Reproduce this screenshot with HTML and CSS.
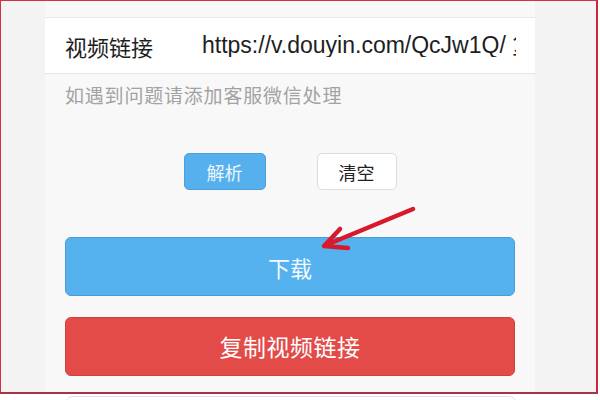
FILE: index.html
```html
<!DOCTYPE html>
<html lang="zh-CN">
<head>
<meta charset="utf-8">
<title>视频下载</title>
<link rel="stylesheet" href="styles.css">
</head>
<body>
<div class="frame">
  <div class="column">
    <div class="field">
      <span class="field-label">视频链接</span>
      <span class="field-value">https://v.douyin.com/QcJw1Q/ 复</span>
    </div>
    <p class="hint">如遇到问题请添加客服微信处理</p>
    <div class="actions">
      <button class="btn btn-primary-sm">解析</button>
      <button class="btn btn-plain">清空</button>
    </div>
    <button class="btn-block btn-blue">下载</button>
    <button class="btn-block btn-red">复制视频链接</button>
  </div>
  <svg class="arrow" width="600" height="400" viewBox="0 0 600 400">
    <path d="M413 209 L326 245" stroke="#d8192c" stroke-width="4.5" stroke-linecap="round" fill="none"/>
    <path d="M340 229 L324 246 L348 248" stroke="#d8192c" stroke-width="4.5" stroke-linecap="round" stroke-linejoin="round" fill="none"/>
  </svg>
</div>
<div class="next-card"></div>
</body>
</html>
```
FILE: styles.css
```css
html, body {
  margin: 0;
  padding: 0;
  background: #ffffff;
  overflow: hidden;
}
body {
  width: 600px;
  height: 400px;
  font-family: "Noto Sans CJK SC", "Liberation Sans", sans-serif;
}
.frame {
  position: relative;
  width: 595px;
  height: 391px;
  border-top: 1px solid #cf3343;
  border-left: 1px solid #cf3343;
  border-right: 2px solid #c8283c;
  border-bottom: 2px solid #a83442;
  background: #f3f3f4;
}
.column {
  margin-left: 44px;
  width: 490px;
  height: 100%;
  background: #f8f8f9;
  padding-top: 16px;
  box-sizing: border-box;
  display: flex;
  flex-direction: column;
}
.field {
  height: 55px;
  background: #ffffff;
  border-top: 1px solid #e8e8e8;
  border-bottom: 1px solid #e4e4e4;
  display: flex;
  align-items: center;
  padding: 0 19px 0 20px;
}
.field-label {
  flex: 0 0 137px;
  font-size: 22px;
  color: #1e1e1e;
  line-height: 1;
}
.field-value {
  flex: 1;
  overflow: hidden;
  white-space: nowrap;
  font-family: "Liberation Sans", "Noto Sans CJK SC", sans-serif;
  font-size: 23px;
  color: #1e1e1e;
  line-height: 1;
}
.hint {
  margin: 9px 0 0 20px;
  font-size: 19px;
  letter-spacing: 0.8px;
  line-height: 24px;
  color: #a2a2a2;
}
.actions {
  margin-top: 46px;
  display: flex;
  justify-content: center;
  gap: 51px;
}
.btn {
  height: 37px;
  border-radius: 5px;
  font-family: "Noto Sans CJK SC", sans-serif;
  font-size: 18px;
  padding: 0;
  line-height: 1;
  box-sizing: border-box;
}
.btn-primary-sm {
  width: 82px;
  background: #56b0ee;
  border: 1px solid #4f9fd9;
  color: #eef7ff;
}
.btn-plain {
  width: 80px;
  background: #ffffff;
  border: 1px solid #dcdcdc;
  color: #222222;
}
.btn-block {
  margin: 0 20px;
  height: 59px;
  border-radius: 6px;
  font-family: "Noto Sans CJK SC", sans-serif;
  font-size: 22px;
  line-height: 1;
  color: #ffffff;
  padding: 0;
  box-sizing: border-box;
}
.btn-blue {
  margin-top: 47px;
  background: #56b1ef;
  border: 1px solid #4a9bd4;
  color: #f2f9ff;
}
.btn-red {
  margin-top: 21px;
  background: #e34b49;
  border: 1px solid #cf4040;
  font-size: 23px;
  letter-spacing: 0.5px;
}
.arrow {
  position: absolute;
  left: -1px;
  top: -1px;
  pointer-events: none;
}
.next-card {
  margin: 2px 0 0 65px;
  width: 450px;
  height: 20px;
  border: 1px solid #e2e2e2;
  border-radius: 8px;
}
```
